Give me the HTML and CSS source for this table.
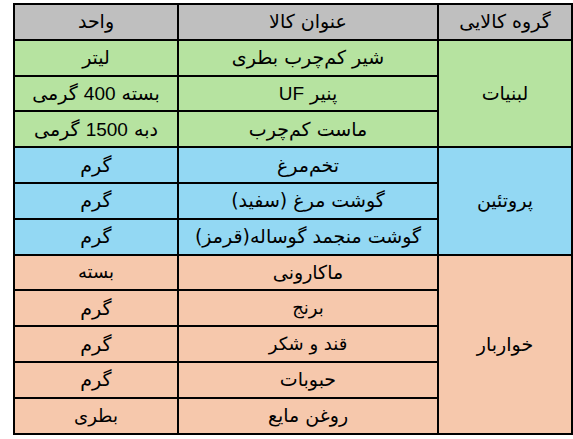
FILE: index.html
```html
<!DOCTYPE html>
<html lang="fa" dir="rtl">
<head>
<meta charset="utf-8">
<link rel="stylesheet" href="styles.css">
</head>
<body>
<table class="grid">
  <colgroup>
    <col class="c-group">
    <col class="c-title">
    <col class="c-unit">
  </colgroup>
  <thead>
    <tr class="head">
      <th>گروه کالایی</th>
      <th>عنوان کالا</th>
      <th>واحد</th>
    </tr>
  </thead>
  <tbody>
    <tr class="dairy">
      <td rowspan="3">لبنیات</td>
      <td>شیر کم‌چرب بطری</td>
      <td>لیتر</td>
    </tr>
    <tr class="dairy">
      <td>پنیر <span class="latin">UF</span></td>
      <td>بسته <span class="latin">400</span> گرمی</td>
    </tr>
    <tr class="dairy">
      <td>ماست کم‌چرب</td>
      <td>دبه <span class="latin">1500</span> گرمی</td>
    </tr>
    <tr class="protein">
      <td rowspan="3">پروتئین</td>
      <td>تخم‌مرغ</td>
      <td>گرم</td>
    </tr>
    <tr class="protein">
      <td>گوشت مرغ (سفید)</td>
      <td>گرم</td>
    </tr>
    <tr class="protein">
      <td>گوشت منجمد گوساله(قرمز)</td>
      <td>گرم</td>
    </tr>
    <tr class="grocery">
      <td rowspan="5">خواربار</td>
      <td>ماکارونی</td>
      <td class="small">بسته</td>
    </tr>
    <tr class="grocery">
      <td class="small">برنج</td>
      <td>گرم</td>
    </tr>
    <tr class="grocery">
      <td class="small">قند و شکر</td>
      <td>گرم</td>
    </tr>
    <tr class="grocery">
      <td>حبوبات</td>
      <td>گرم</td>
    </tr>
    <tr class="grocery">
      <td>روغن مایع</td>
      <td class="small">بطری</td>
    </tr>
  </tbody>
</table>
</body>
</html>
```

FILE: styles.css
```css
html, body {
  margin: 0;
  padding: 0;
  background: #ffffff;
}

body {
  padding: 3px 0 0 3px;
  font-family: "DejaVu Sans", "Noto Sans", sans-serif;
  color: #000;
}

.grid {
  border-collapse: collapse;
  width: 558px;
  table-layout: fixed;
}

.c-group { width: 134px; }
.c-title { width: 260px; }
.c-unit { width: 164px; }

.grid th,
.grid td {
  border: 2px solid #000;
  height: 33.8px;
  padding: 0;
  text-align: center;
  vertical-align: middle;
  font-size: 19px;
  font-weight: normal;
  line-height: 1;
}

.head th { background: #bfbfbf; }
.dairy td { background: #b6e3a0; }
.protein td { background: #93d8f3; }
.grocery td { background: #f6c8ac; }

.latin {
  font-family: "Liberation Sans", Arial, sans-serif;
  font-size: 19px;
}

.grid td.small {
  font-size: 18px;
}
```
